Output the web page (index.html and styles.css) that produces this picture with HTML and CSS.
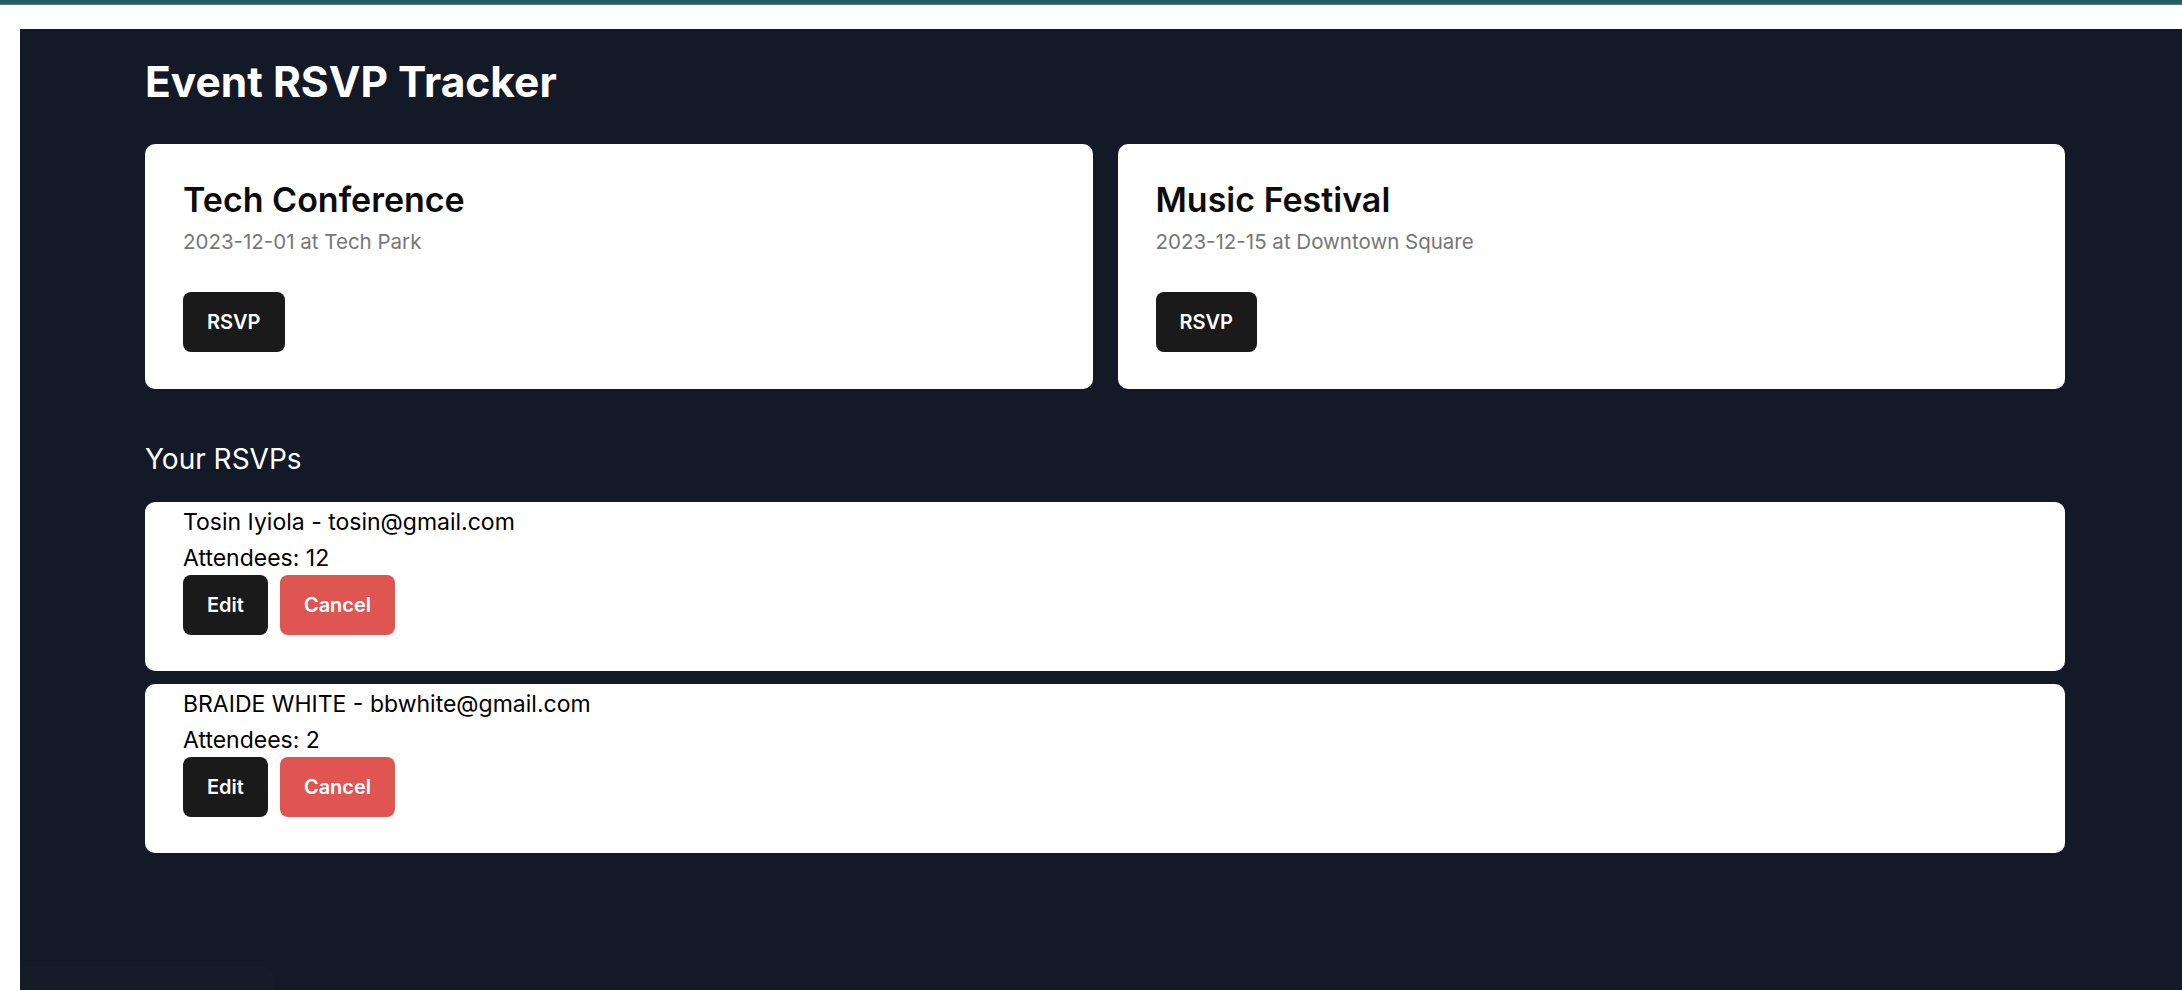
FILE: index.html
```html
<!DOCTYPE html>
<html lang="en">
<head>
<meta charset="utf-8">
<title>Event RSVP Tracker</title>
<link rel="stylesheet" href="styles.css">
</head>
<body>
<div class="topbar"></div>
<div class="frame">
  <main class="panel">
    <div class="container">
      <h1 class="title">Event RSVP Tracker</h1>
      <section class="events">
        <article class="event-card">
          <h2 class="event-name">Tech Conference</h2>
          <p class="event-meta">2023-12-01 at Tech Park</p>
          <button class="btn btn-dark">RSVP</button>
        </article>
        <article class="event-card">
          <h2 class="event-name">Music Festival</h2>
          <p class="event-meta">2023-12-15 at Downtown Square</p>
          <button class="btn btn-dark">RSVP</button>
        </article>
      </section>
      <h3 class="section-title">Your RSVPs</h3>
      <section class="rsvp-list">
        <div class="rsvp-item">
          <p class="rsvp-line">Tosin Iyiola - tosin@gmail.com</p>
          <p class="rsvp-line rsvp-count">Attendees: 12</p>
          <div class="actions">
            <button class="btn btn-dark">Edit</button>
            <button class="btn btn-red">Cancel</button>
          </div>
        </div>
        <div class="rsvp-item">
          <p class="rsvp-line">BRAIDE WHITE - bbwhite@gmail.com</p>
          <p class="rsvp-line rsvp-count">Attendees: 2</p>
          <div class="actions">
            <button class="btn btn-dark">Edit</button>
            <button class="btn btn-red">Cancel</button>
          </div>
        </div>
      </section>
    </div>
  </main>
</div>
<div class="status-bar"></div>
</body>
</html>
```
FILE: styles.css
```css
* { box-sizing: border-box; }
html, body { margin: 0; padding: 0; }
body {
  background: #ffffff;
  font-family: Inter, "Noto Sans", "Liberation Sans", sans-serif;
  height: 990px;
  overflow: hidden;
}
.topbar {
  height: 5px;
  background: #2a5c64;
  border-bottom: 1px solid #4d7f86;
}
.frame {
  padding: 24px 0 0 20px;
}
.panel {
  background: #131927;
  min-height: 980px;
  padding: 28px 0 0 125px;
}
.container {
  width: 1920px;
}
.title {
  margin: 0;
  color: #ffffff;
  font-size: 42.5px;
  font-weight: 700;
  line-height: 50px;
}
.events {
  margin-top: 37px;
  display: grid;
  grid-template-columns: 1fr 1fr;
  gap: 25px;
}
.event-card {
  background: #ffffff;
  border-radius: 10px;
  padding: 35px 38px 37px;
}
.event-name {
  margin: 0;
  font-size: 34px;
  line-height: 41px;
  font-weight: 600;
  color: #0c0c0c;
}
.event-meta {
  margin: 8px 0 37px;
  font-size: 20.5px;
  line-height: 27px;
  color: #777777;
}
.btn {
  height: 60px;
  padding: 0 24px;
  border: none;
  border-radius: 8px;
  font-family: inherit;
  font-size: 20px;
  font-weight: 600;
  color: #ffffff;
  cursor: pointer;
}
.btn-dark { background: #1a1a1a; }
.btn-red { background: #df5551; }
.section-title {
  margin: 53px 0 0;
  color: #ffffff;
  font-size: 28px;
  line-height: 34px;
  font-weight: 400;
}
.rsvp-list {
  margin-top: 26px;
  display: flex;
  flex-direction: column;
  gap: 13px;
}
.rsvp-item {
  background: #ffffff;
  border-radius: 10px;
  padding: 7px 38px 36px;
}
.rsvp-line {
  margin: 0;
  font-size: 23px;
  line-height: 27px;
  color: #000000;
}
.rsvp-count { margin-top: 9px; }
.actions {
  margin-top: 3px;
  display: flex;
  gap: 12px;
}
.status-bar {
  position: absolute;
  left: 20px;
  bottom: 0;
  width: 253px;
  height: 23px;
  background: #161b28;
  border-top-right-radius: 8px;
}
```
